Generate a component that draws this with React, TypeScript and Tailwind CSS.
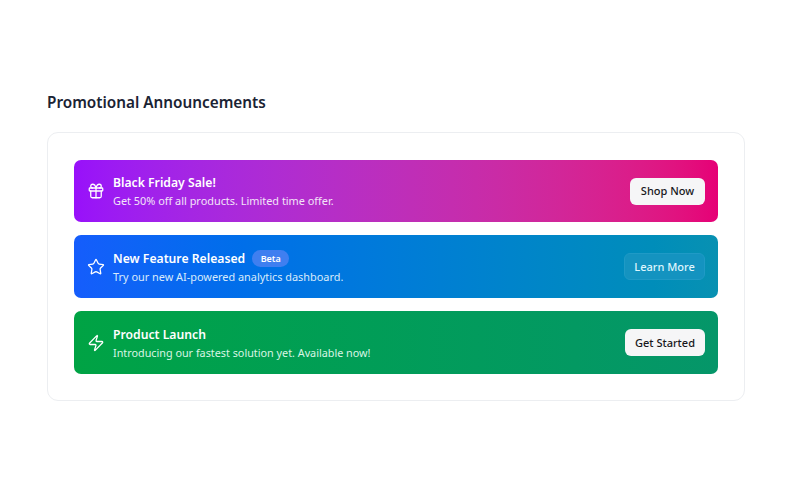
import { Gift, Star, Zap } from "lucide-react";

const font = "[font-family:'Noto_Sans',sans-serif]";

export default function App() {
  return (
    <div className={`w-[800px] h-[500px] bg-white flex flex-col pt-[90px] pl-[47px] pr-[55px] ${font}`}>
      <h2 className="text-[15.3px] leading-[24px] font-semibold text-[#1a2333] mb-[18px]">Promotional Announcements</h2>
      <div className="rounded-[11px] border border-[#eceef1] pt-[27px] px-[26px] flex flex-col gap-[13px] h-[269px]">
        <div className="h-[62px] shrink-0 rounded-[7px] bg-gradient-to-r from-[#9810fa] to-[#e60076] flex items-center px-[13px] text-white">
          <Gift className="w-[18px] h-[18px] mr-[8px]" strokeWidth={1.7} />
          <div className="flex-1 pt-[2px]">
            <div className="text-[12.2px] leading-[18px] font-semibold">Black Friday Sale!</div>
            <div className="text-[10.9px] leading-[18px] text-[#f3e4f8]">Get 50% off all products. Limited time offer.</div>
          </div>
          <button className="h-[27px] w-[75px] rounded-[6px] bg-[#f6f6f7] text-[#18181b] text-[11px] font-medium">Shop Now</button>
        </div>
        <div className="h-[63px] shrink-0 rounded-[7px] bg-gradient-to-r from-[#155dfc] to-[#0891b2] flex items-center px-[13px] text-white">
          <Star className="w-[18px] h-[18px] mr-[8px]" strokeWidth={1.7} />
          <div className="flex-1 pt-[2px]">
            <div className="flex items-center gap-[7px]">
              <span className="text-[12.2px] leading-[18px] font-semibold">New Feature Released</span>
              <span className="h-[17px] px-[8.5px] rounded-full bg-[#3f7ff0] text-[9px] leading-[17px] font-semibold">Beta</span>
            </div>
            <div className="text-[10.9px] leading-[18px] text-[#d9ebfb]">Try our new AI-powered analytics dashboard.</div>
          </div>
          <button className="h-[27px] w-[81px] pt-[1px] rounded-[6px] bg-[#1493c0] border border-[#1f9ac6] text-[#dff6fd] text-[11px] font-medium">Learn More</button>
        </div>
        <div className="h-[63px] shrink-0 rounded-[7px] bg-gradient-to-r from-[#00a344] to-[#059669] flex items-center px-[13px] text-white">
          <Zap className="w-[18px] h-[18px] mr-[8px]" strokeWidth={1.7} />
          <div className="flex-1 pt-[2px]">
            <div className="text-[12.2px] leading-[18px] font-semibold">Product Launch</div>
            <div className="text-[10.8px] leading-[18px] text-[#d9f5e4]">Introducing our fastest solution yet. Available now!</div>
          </div>
          <button className="h-[27px] w-[80px] pt-[1px] rounded-[6px] bg-[#f6f6f7] text-[#18181b] text-[11px] font-medium">Get Started</button>
        </div>
      </div>
    </div>
  );
}
